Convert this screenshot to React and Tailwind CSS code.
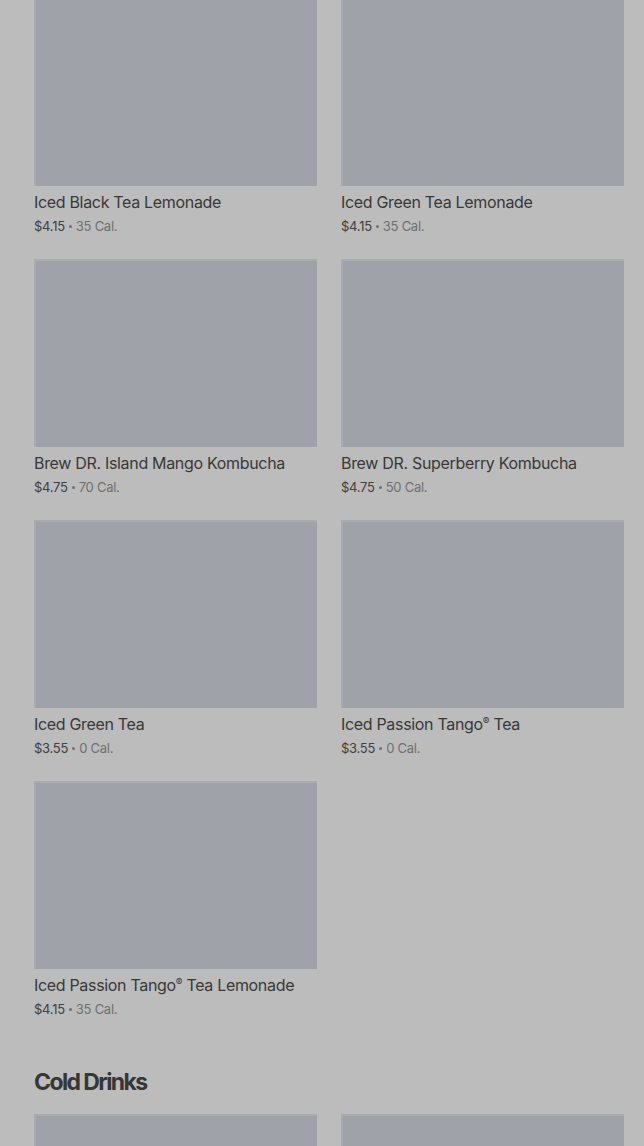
const items = [
  { name: "Iced Black Tea Lemonade", price: "$4.15", cal: "35 Cal." },
  { name: "Iced Green Tea Lemonade", price: "$4.15", cal: "35 Cal." },
  { name: "Brew DR. Island Mango Kombucha", price: "$4.75", cal: "70 Cal." },
  { name: "Brew DR. Superberry Kombucha", price: "$4.75", cal: "50 Cal." },
  { name: "Iced Green Tea", price: "$3.55", cal: "0 Cal." },
  { name: "Iced Passion Tango® Tea", price: "$3.55", cal: "0 Cal." },
  { name: "Iced Passion Tango® Tea Lemonade", price: "$4.15", cal: "35 Cal." },
];

// render the ® a bit smaller and raised, like the menu does
function Name({ text }) {
  const parts = text.split("®");
  if (parts.length === 1) return text;
  return (
    <>
      {parts[0]}
      <span className="text-[10px] leading-none align-[5px]">®</span>
      {parts[1]}
    </>
  );
}

function ItemCard({ item }) {
  return (
    <div className="flex flex-col">
      <div className="h-[188px] bg-[#a0a2a9] border-t-2 border-l-2 border-[#a9abb0]" />
      <p className="mt-1 h-6 text-[16px] leading-6 tracking-[-0.02em] text-[#383838] truncate">
        <Name text={item.name} />
      </p>
      <div className="mt-[2px] h-5 flex items-center text-[13px] leading-5 tracking-[-0.02em] text-[#707070]">
        <span className="text-[#404040]">{item.price}</span>
        <span className="mx-[4px] w-[3px] h-[3px] rounded-full bg-[#707070]" />
        <span>{item.cal}</span>
      </div>
    </div>
  );
}

export default function App() {
  return (
    <div
      className="min-h-screen bg-[#bcbcbc] pl-[34px] pr-[20px] overflow-hidden"
      style={{ fontFamily: "Inter, 'Noto Sans', sans-serif" }}
    >
      <div className="-mt-[2px] grid grid-cols-2 gap-x-6 gap-y-[23px]">
        {items.map((item) => (
          <ItemCard key={item.name} item={item} />
        ))}
      </div>

      {/* next section */}
      <h2 className="mt-[47px] text-[23px] leading-8 font-bold tracking-[-0.07em] text-[#363636]">
        Cold Drinks
      </h2>
      <div className="mt-4 grid grid-cols-2 gap-x-6">
        <div className="h-[188px] bg-[#a0a2a9] border-t-2 border-l-2 border-[#a9abb0]" />
        <div className="h-[188px] bg-[#a0a2a9] border-t-2 border-l-2 border-[#a9abb0]" />
      </div>
    </div>
  );
}
